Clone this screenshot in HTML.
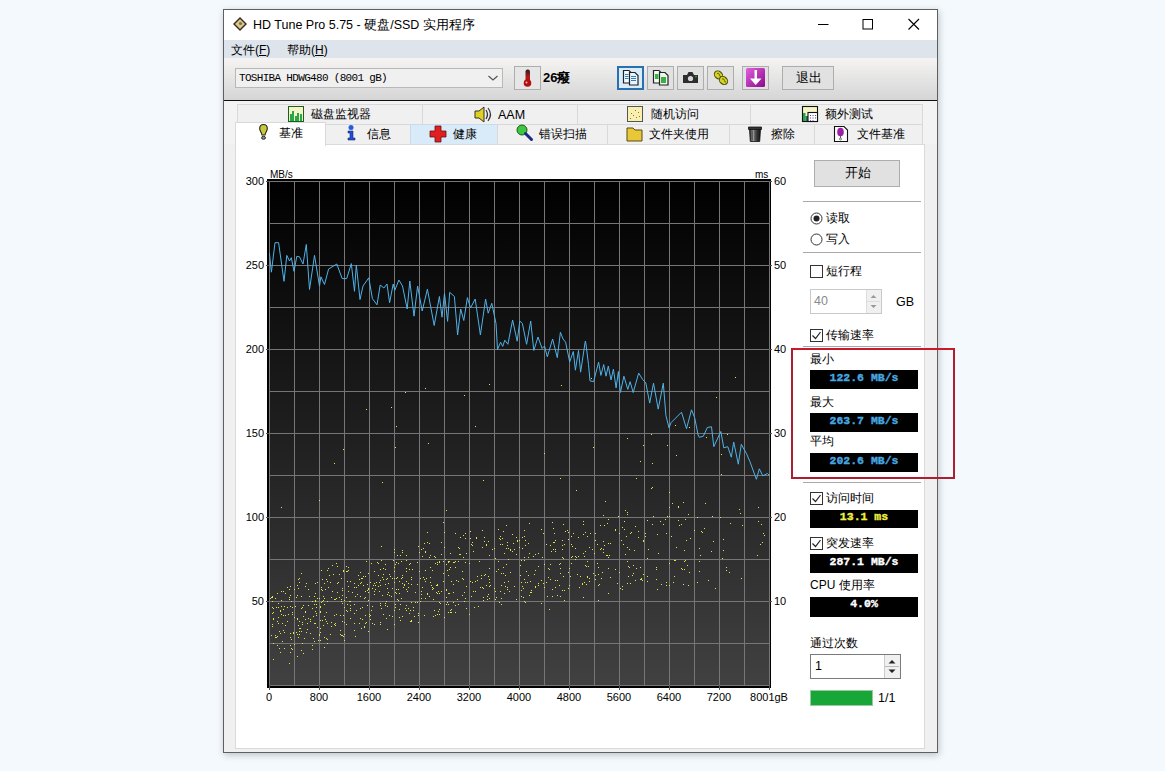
<!DOCTYPE html>
<html><head><meta charset="utf-8">
<style>
*{margin:0;padding:0;box-sizing:border-box}
html,body{width:1165px;height:771px;overflow:hidden;background:#f3f9fd;font-family:"Liberation Sans",sans-serif;color:#000}
.a{position:absolute}
.win{position:absolute;left:223px;top:9px;width:715px;height:744px;border:1px solid #5f5f5f;background:#f0f0f0;box-shadow:1px 2px 7px rgba(0,0,0,0.22)}
.yl{position:absolute;left:235px;width:29px;text-align:right;font-size:11px;line-height:14px}
.yr{position:absolute;left:774px;width:30px;text-align:left;font-size:11px;line-height:14px}
.xl{position:absolute;top:690px;width:60px;text-align:center;font-size:11px;line-height:14px}
.t12{font-size:12px;line-height:16px}
.lcd{position:absolute;left:810px;width:108px;background:#000;font-family:"Liberation Mono",monospace;font-weight:bold;font-size:11.5px;text-align:center;line-height:15px;-webkit-text-stroke:0.35px currentColor}
.cb{position:absolute;left:810px;width:13px;height:13px;border:1px solid #333;background:#fff}
.tab{position:absolute;height:20px;border:1px solid #d9d9d9;border-bottom:none;background:#f0f0f0;font-size:12px;line-height:19px}
.btn{position:absolute;border:1px solid #adadad;background:#e1e1e1}
.sep{position:absolute;left:803px;width:118px;height:1px;background:#a8a8a8}
</style></head><body>
<div class="win"></div>
<!-- title bar -->
<div class="a" style="left:224px;top:10px;width:713px;height:30px;background:#fff"></div>
<div class="a t12" style="left:253px;top:17px;font-size:12.5px;color:#000">HD Tune Pro 5.75 - 硬盘/SSD 实用程序</div>
<!-- menu -->
<div class="a" style="left:224px;top:40px;width:713px;height:18px;background:#dde4ec"></div>
<div class="a t12" style="left:231px;top:42px">文件(<u>F</u>)</div>
<div class="a t12" style="left:287px;top:42px">帮助(<u>H</u>)</div>
<!-- toolbar -->
<div class="a" style="left:224px;top:58px;width:713px;height:42px;background:linear-gradient(#f5f4f3,#d5d5d5)"></div>
<div class="a" style="left:224px;top:100px;width:713px;height:1.5px;background:#111"></div>
<!-- tab panel -->
<div class="a" style="left:235px;top:144px;width:690px;height:605px;background:#fff;border:1px solid #dadada"></div>
<svg width="1165" height="771" style="position:absolute;left:0;top:0">
<defs><linearGradient id="bg" x1="0" y1="0" x2="0" y2="1"><stop offset="0" stop-color="#000"/><stop offset="0.5" stop-color="#1f1f1f"/><stop offset="1" stop-color="#414141"/></linearGradient></defs>
<rect x="267" y="179" width="504" height="509" fill="#000"/>
<rect x="269" y="181" width="500" height="504" fill="url(#bg)"/>
<path d="M269.5 181V685 M294.5 181V685 M319.5 181V685 M344.5 181V685 M369.5 181V685 M394.5 181V685 M419.5 181V685 M444.5 181V685 M469.5 181V685 M494.5 181V685 M519.5 181V685 M544.5 181V685 M569.5 181V685 M594.5 181V685 M619.5 181V685 M644.5 181V685 M669.5 181V685 M694.5 181V685 M719.5 181V685 M744.5 181V685 M769.5 181V685 M269 181.5H769 M269 223.5H769 M269 265.5H769 M269 307.5H769 M269 349.5H769 M269 391.5H769 M269 433.5H769 M269 475.5H769 M269 517.5H769 M269 559.5H769 M269 601.5H769 M269 643.5H769 M269 685.5H769" stroke="#767676" stroke-width="1" fill="none" shape-rendering="crispEdges"/>
<path d="M431 585h1v1h-1zM299 582h1v1h-1zM305 611h1v1h-1zM557 595h1v1h-1zM342 590h1v1h-1zM588 566h1v1h-1zM300 628h1v1h-1zM496 597h1v1h-1zM392 588h1v1h-1zM758 521h1v1h-1zM346 566h1v1h-1zM559 585h1v1h-1zM506 525h1v1h-1zM679 525h1v1h-1zM281 606h1v1h-1zM334 599h1v1h-1zM310 621h1v1h-1zM409 564h1v1h-1zM358 575h1v1h-1zM272 613h1v1h-1zM527 582h1v1h-1zM465 538h1v1h-1zM301 596h1v1h-1zM270 598h1v1h-1zM283 630h1v1h-1zM451 609h1v1h-1zM502 538h1v1h-1zM683 502h1v1h-1zM533 556h1v1h-1zM400 555h1v1h-1zM434 610h1v1h-1zM383 574h1v1h-1zM284 606h1v1h-1zM380 569h1v1h-1zM312 645h1v1h-1zM359 579h1v1h-1zM631 532h1v1h-1zM343 636h1v1h-1zM445 559h1v1h-1zM681 524h1v1h-1zM390 576h1v1h-1zM446 590h1v1h-1zM520 565h1v1h-1zM272 601h1v1h-1zM432 587h1v1h-1zM394 610h1v1h-1zM575 556h1v1h-1zM688 514h1v1h-1zM306 583h1v1h-1zM347 604h1v1h-1zM379 591h1v1h-1zM350 601h1v1h-1zM367 605h1v1h-1zM279 631h1v1h-1zM302 643h1v1h-1zM290 606h1v1h-1zM678 507h1v1h-1zM315 623h1v1h-1zM306 632h1v1h-1zM303 616h1v1h-1zM403 587h1v1h-1zM295 606h1v1h-1zM648 549h1v1h-1zM395 604h1v1h-1zM364 626h1v1h-1zM466 586h1v1h-1zM441 591h1v1h-1zM297 585h1v1h-1zM397 555h1v1h-1zM410 563h1v1h-1zM348 586h1v1h-1zM424 543h1v1h-1zM506 548h1v1h-1zM315 583h1v1h-1zM422 587h1v1h-1zM464 601h1v1h-1zM292 649h1v1h-1zM339 597h1v1h-1zM385 569h1v1h-1zM548 577h1v1h-1zM514 586h1v1h-1zM598 574h1v1h-1zM307 629h1v1h-1zM516 554h1v1h-1zM590 533h1v1h-1zM553 528h1v1h-1zM607 555h1v1h-1zM715 588h1v1h-1zM279 648h1v1h-1zM374 571h1v1h-1zM341 635h1v1h-1zM385 584h1v1h-1zM272 624h1v1h-1zM427 542h1v1h-1zM688 585h1v1h-1zM455 612h1v1h-1zM450 567h1v1h-1zM412 569h1v1h-1zM524 560h1v1h-1zM628 566h1v1h-1zM413 607h1v1h-1zM418 615h1v1h-1zM597 563h1v1h-1zM374 594h1v1h-1zM494 548h1v1h-1zM389 595h1v1h-1zM643 541h1v1h-1zM301 650h1v1h-1zM521 590h1v1h-1zM469 614h1v1h-1zM705 503h1v1h-1zM562 549h1v1h-1zM324 616h1v1h-1zM498 529h1v1h-1zM386 601h1v1h-1zM326 612h1v1h-1zM463 579h1v1h-1zM387 629h1v1h-1zM423 577h1v1h-1zM383 579h1v1h-1zM610 577h1v1h-1zM678 520h1v1h-1zM517 541h1v1h-1zM343 570h1v1h-1zM341 578h1v1h-1zM362 607h1v1h-1zM601 548h1v1h-1zM409 613h1v1h-1zM448 604h1v1h-1zM366 622h1v1h-1zM475 591h1v1h-1zM439 614h1v1h-1zM401 578h1v1h-1zM740 513h1v1h-1zM462 571h1v1h-1zM572 546h1v1h-1zM660 521h1v1h-1zM287 607h1v1h-1zM402 552h1v1h-1zM387 594h1v1h-1zM601 578h1v1h-1zM638 531h1v1h-1zM346 597h1v1h-1zM523 597h1v1h-1zM763 533h1v1h-1zM290 586h1v1h-1zM399 609h1v1h-1zM378 563h1v1h-1zM397 599h1v1h-1zM608 543h1v1h-1zM302 607h1v1h-1zM352 592h1v1h-1zM426 578h1v1h-1zM451 581h1v1h-1zM273 612h1v1h-1zM500 536h1v1h-1zM314 604h1v1h-1zM324 637h1v1h-1zM368 631h1v1h-1zM681 568h1v1h-1zM471 596h1v1h-1zM528 543h1v1h-1zM290 637h1v1h-1zM569 568h1v1h-1zM479 561h1v1h-1zM282 623h1v1h-1zM498 569h1v1h-1zM316 615h1v1h-1zM587 576h1v1h-1zM521 596h1v1h-1zM726 570h1v1h-1zM647 581h1v1h-1zM676 547h1v1h-1zM522 537h1v1h-1zM350 618h1v1h-1zM327 623h1v1h-1zM322 620h1v1h-1zM449 569h1v1h-1zM640 567h1v1h-1zM562 540h1v1h-1zM287 621h1v1h-1zM336 614h1v1h-1zM271 597h1v1h-1zM563 576h1v1h-1zM337 592h1v1h-1zM470 538h1v1h-1zM550 579h1v1h-1zM394 549h1v1h-1zM472 542h1v1h-1zM739 509h1v1h-1zM522 586h1v1h-1zM294 644h1v1h-1zM273 643h1v1h-1zM383 568h1v1h-1zM437 593h1v1h-1zM546 582h1v1h-1zM402 616h1v1h-1zM400 604h1v1h-1zM642 580h1v1h-1zM504 593h1v1h-1zM488 576h1v1h-1zM309 596h1v1h-1zM323 600h1v1h-1zM303 605h1v1h-1zM303 653h1v1h-1zM326 638h1v1h-1zM585 532h1v1h-1zM429 543h1v1h-1zM411 577h1v1h-1zM285 615h1v1h-1zM443 581h1v1h-1zM678 506h1v1h-1zM272 626h1v1h-1zM443 561h1v1h-1zM411 602h1v1h-1zM310 633h1v1h-1zM583 553h1v1h-1zM712 516h1v1h-1zM459 548h1v1h-1zM444 547h1v1h-1zM354 623h1v1h-1zM365 615h1v1h-1zM347 581h1v1h-1zM433 616h1v1h-1zM321 589h1v1h-1zM635 526h1v1h-1zM323 596h1v1h-1zM615 569h1v1h-1zM341 599h1v1h-1zM480 587h1v1h-1zM589 547h1v1h-1zM584 556h1v1h-1zM580 576h1v1h-1zM658 553h1v1h-1zM289 597h1v1h-1zM320 611h1v1h-1zM525 582h1v1h-1zM375 589h1v1h-1zM331 597h1v1h-1zM277 621h1v1h-1zM445 559h1v1h-1zM379 582h1v1h-1zM334 624h1v1h-1zM446 604h1v1h-1zM503 573h1v1h-1zM694 530h1v1h-1zM482 530h1v1h-1zM420 578h1v1h-1zM598 600h1v1h-1zM340 615h1v1h-1zM276 637h1v1h-1zM386 579h1v1h-1zM354 604h1v1h-1zM368 589h1v1h-1zM546 544h1v1h-1zM503 567h1v1h-1zM273 619h1v1h-1zM457 599h1v1h-1zM284 632h1v1h-1zM524 601h1v1h-1zM439 561h1v1h-1zM375 585h1v1h-1zM682 569h1v1h-1zM435 563h1v1h-1zM290 652h1v1h-1zM273 659h1v1h-1zM577 574h1v1h-1zM602 572h1v1h-1zM360 618h1v1h-1zM550 545h1v1h-1zM429 596h1v1h-1zM290 645h1v1h-1zM277 636h1v1h-1zM475 581h1v1h-1zM346 571h1v1h-1zM314 596h1v1h-1zM628 576h1v1h-1zM633 565h1v1h-1zM627 514h1v1h-1zM425 551h1v1h-1zM512 551h1v1h-1zM342 595h1v1h-1zM584 556h1v1h-1zM552 522h1v1h-1zM435 615h1v1h-1zM458 581h1v1h-1zM672 503h1v1h-1zM291 648h1v1h-1zM555 587h1v1h-1zM443 573h1v1h-1zM370 619h1v1h-1zM502 544h1v1h-1zM314 623h1v1h-1zM507 542h1v1h-1zM360 583h1v1h-1zM344 640h1v1h-1zM323 625h1v1h-1zM529 523h1v1h-1zM552 589h1v1h-1zM396 562h1v1h-1zM312 608h1v1h-1zM723 550h1v1h-1zM330 582h1v1h-1zM604 545h1v1h-1zM380 580h1v1h-1zM687 565h1v1h-1zM298 637h1v1h-1zM322 590h1v1h-1zM510 549h1v1h-1zM627 512h1v1h-1zM380 624h1v1h-1zM318 640h1v1h-1zM495 591h1v1h-1zM380 605h1v1h-1zM342 588h1v1h-1zM354 587h1v1h-1zM327 570h1v1h-1zM508 548h1v1h-1zM319 635h1v1h-1zM757 555h1v1h-1zM340 630h1v1h-1zM555 540h1v1h-1zM624 521h1v1h-1zM406 589h1v1h-1zM371 610h1v1h-1zM674 576h1v1h-1zM516 599h1v1h-1zM363 585h1v1h-1zM455 533h1v1h-1zM330 634h1v1h-1zM430 577h1v1h-1zM526 571h1v1h-1zM361 578h1v1h-1zM618 516h1v1h-1zM557 580h1v1h-1zM292 614h1v1h-1zM409 569h1v1h-1zM343 615h1v1h-1zM464 592h1v1h-1zM657 534h1v1h-1zM297 656h1v1h-1zM585 565h1v1h-1zM486 545h1v1h-1zM711 551h1v1h-1zM608 557h1v1h-1zM529 595h1v1h-1zM422 556h1v1h-1zM404 584h1v1h-1zM332 591h1v1h-1zM314 641h1v1h-1zM554 533h1v1h-1zM575 548h1v1h-1zM380 585h1v1h-1zM699 548h1v1h-1zM417 562h1v1h-1zM301 608h1v1h-1zM324 647h1v1h-1zM446 589h1v1h-1zM726 567h1v1h-1zM555 580h1v1h-1zM572 556h1v1h-1zM465 562h1v1h-1zM519 547h1v1h-1zM560 596h1v1h-1zM275 635h1v1h-1zM528 575h1v1h-1zM448 561h1v1h-1zM319 598h1v1h-1zM489 598h1v1h-1zM355 636h1v1h-1zM525 602h1v1h-1zM348 591h1v1h-1zM364 598h1v1h-1zM587 561h1v1h-1zM423 548h1v1h-1zM603 552h1v1h-1zM402 583h1v1h-1zM331 622h1v1h-1zM320 606h1v1h-1zM301 631h1v1h-1zM626 536h1v1h-1zM560 563h1v1h-1zM297 619h1v1h-1zM394 624h1v1h-1zM427 594h1v1h-1zM391 596h1v1h-1zM424 579h1v1h-1zM448 612h1v1h-1zM550 564h1v1h-1zM331 597h1v1h-1zM365 576h1v1h-1zM348 570h1v1h-1zM686 540h1v1h-1zM446 564h1v1h-1zM374 591h1v1h-1zM622 586h1v1h-1zM453 584h1v1h-1zM525 545h1v1h-1zM462 578h1v1h-1zM358 585h1v1h-1zM324 598h1v1h-1zM425 552h1v1h-1zM411 621h1v1h-1zM336 563h1v1h-1zM600 549h1v1h-1zM583 524h1v1h-1zM290 595h1v1h-1zM290 633h1v1h-1zM627 547h1v1h-1zM413 610h1v1h-1zM294 589h1v1h-1zM643 574h1v1h-1zM410 621h1v1h-1zM583 521h1v1h-1zM483 600h1v1h-1zM400 620h1v1h-1zM541 529h1v1h-1zM425 598h1v1h-1zM388 592h1v1h-1zM419 552h1v1h-1zM436 585h1v1h-1zM568 588h1v1h-1zM327 601h1v1h-1zM368 592h1v1h-1zM432 570h1v1h-1zM312 649h1v1h-1zM324 604h1v1h-1zM595 540h1v1h-1zM284 648h1v1h-1zM354 630h1v1h-1zM433 599h1v1h-1zM454 562h1v1h-1zM552 596h1v1h-1zM516 537h1v1h-1zM559 564h1v1h-1zM315 611h1v1h-1zM630 583h1v1h-1zM411 579h1v1h-1zM439 593h1v1h-1zM417 584h1v1h-1zM367 590h1v1h-1zM674 560h1v1h-1zM418 613h1v1h-1zM441 542h1v1h-1zM608 519h1v1h-1zM477 580h1v1h-1zM327 643h1v1h-1zM396 593h1v1h-1zM514 549h1v1h-1zM563 558h1v1h-1zM544 587h1v1h-1zM321 602h1v1h-1zM656 569h1v1h-1zM278 607h1v1h-1zM622 589h1v1h-1zM354 583h1v1h-1zM331 626h1v1h-1zM571 563h1v1h-1zM326 621h1v1h-1zM327 581h1v1h-1zM362 578h1v1h-1zM742 525h1v1h-1zM669 516h1v1h-1zM507 589h1v1h-1zM308 589h1v1h-1zM355 596h1v1h-1zM463 535h1v1h-1zM293 632h1v1h-1zM406 555h1v1h-1zM764 535h1v1h-1zM585 551h1v1h-1zM421 591h1v1h-1zM586 566h1v1h-1zM510 550h1v1h-1zM444 532h1v1h-1zM553 542h1v1h-1zM420 601h1v1h-1zM310 619h1v1h-1zM448 575h1v1h-1zM398 563h1v1h-1zM621 540h1v1h-1zM593 573h1v1h-1zM569 585h1v1h-1zM364 627h1v1h-1zM433 588h1v1h-1zM299 578h1v1h-1zM437 584h1v1h-1zM762 542h1v1h-1zM434 556h1v1h-1zM538 566h1v1h-1zM570 576h1v1h-1zM656 567h1v1h-1zM496 571h1v1h-1zM507 587h1v1h-1zM647 520h1v1h-1zM547 596h1v1h-1zM344 622h1v1h-1zM657 589h1v1h-1zM587 577h1v1h-1zM324 583h1v1h-1zM470 531h1v1h-1zM382 577h1v1h-1zM385 605h1v1h-1zM378 575h1v1h-1zM411 584h1v1h-1zM568 572h1v1h-1zM374 583h1v1h-1zM418 546h1v1h-1zM275 598h1v1h-1zM610 543h1v1h-1zM758 507h1v1h-1zM521 560h1v1h-1zM280 611h1v1h-1zM338 582h1v1h-1zM344 600h1v1h-1zM406 571h1v1h-1zM292 612h1v1h-1zM541 580h1v1h-1zM469 563h1v1h-1zM474 607h1v1h-1zM397 577h1v1h-1zM722 558h1v1h-1zM592 549h1v1h-1zM387 606h1v1h-1zM625 554h1v1h-1zM583 534h1v1h-1zM402 577h1v1h-1zM380 622h1v1h-1zM531 590h1v1h-1zM499 602h1v1h-1zM702 532h1v1h-1zM347 571h1v1h-1zM495 558h1v1h-1zM508 581h1v1h-1zM609 555h1v1h-1zM460 554h1v1h-1zM299 631h1v1h-1zM685 560h1v1h-1zM370 615h1v1h-1zM490 585h1v1h-1zM473 591h1v1h-1zM455 567h1v1h-1zM647 558h1v1h-1zM283 615h1v1h-1zM489 568h1v1h-1zM470 581h1v1h-1zM329 575h1v1h-1zM297 634h1v1h-1zM297 618h1v1h-1zM704 528h1v1h-1zM273 608h1v1h-1zM524 536h1v1h-1zM697 517h1v1h-1zM501 573h1v1h-1zM669 585h1v1h-1zM535 570h1v1h-1zM406 568h1v1h-1zM299 621h1v1h-1zM700 555h1v1h-1zM417 602h1v1h-1zM320 628h1v1h-1zM398 600h1v1h-1zM298 579h1v1h-1zM560 568h1v1h-1zM689 572h1v1h-1zM459 554h1v1h-1zM317 627h1v1h-1zM683 584h1v1h-1zM415 602h1v1h-1zM568 532h1v1h-1zM405 608h1v1h-1zM597 544h1v1h-1zM393 560h1v1h-1zM548 568h1v1h-1zM567 530h1v1h-1zM336 598h1v1h-1zM600 525h1v1h-1zM344 634h1v1h-1zM517 540h1v1h-1zM522 548h1v1h-1zM371 563h1v1h-1zM278 623h1v1h-1zM554 542h1v1h-1zM285 625h1v1h-1zM713 541h1v1h-1zM624 529h1v1h-1zM760 544h1v1h-1zM729 572h1v1h-1zM473 551h1v1h-1zM441 554h1v1h-1zM509 591h1v1h-1zM369 616h1v1h-1zM316 607h1v1h-1zM641 579h1v1h-1zM564 590h1v1h-1zM741 578h1v1h-1zM395 564h1v1h-1zM465 598h1v1h-1zM472 582h1v1h-1zM272 597h1v1h-1zM571 544h1v1h-1zM578 537h1v1h-1zM619 572h1v1h-1zM291 601h1v1h-1zM382 595h1v1h-1zM684 550h1v1h-1zM357 594h1v1h-1zM320 640h1v1h-1zM308 605h1v1h-1zM585 565h1v1h-1zM298 625h1v1h-1zM643 540h1v1h-1zM342 603h1v1h-1zM589 581h1v1h-1zM541 603h1v1h-1zM408 583h1v1h-1zM665 519h1v1h-1zM638 537h1v1h-1zM418 622h1v1h-1zM430 555h1v1h-1zM466 608h1v1h-1zM494 588h1v1h-1zM427 593h1v1h-1zM645 536h1v1h-1zM534 574h1v1h-1zM402 550h1v1h-1zM476 538h1v1h-1zM656 579h1v1h-1zM440 603h1v1h-1zM535 586h1v1h-1zM337 566h1v1h-1zM603 549h1v1h-1zM406 610h1v1h-1zM335 625h1v1h-1zM407 591h1v1h-1zM381 608h1v1h-1zM669 563h1v1h-1zM272 596h1v1h-1zM299 628h1v1h-1zM325 619h1v1h-1zM435 557h1v1h-1zM285 593h1v1h-1zM481 578h1v1h-1zM525 540h1v1h-1zM761 524h1v1h-1zM623 544h1v1h-1zM471 544h1v1h-1zM368 573h1v1h-1zM549 609h1v1h-1zM301 573h1v1h-1zM401 561h1v1h-1zM292 607h1v1h-1zM321 570h1v1h-1zM507 545h1v1h-1zM551 551h1v1h-1zM635 580h1v1h-1zM337 583h1v1h-1zM501 598h1v1h-1zM305 619h1v1h-1zM372 623h1v1h-1zM322 579h1v1h-1zM489 586h1v1h-1zM504 582h1v1h-1zM615 530h1v1h-1zM568 539h1v1h-1zM289 663h1v1h-1zM289 599h1v1h-1zM346 624h1v1h-1zM363 576h1v1h-1zM271 635h1v1h-1zM520 575h1v1h-1zM542 557h1v1h-1zM641 578h1v1h-1zM594 553h1v1h-1zM446 597h1v1h-1zM453 592h1v1h-1zM653 516h1v1h-1zM529 553h1v1h-1zM627 561h1v1h-1zM360 596h1v1h-1zM396 578h1v1h-1zM645 533h1v1h-1zM280 652h1v1h-1zM322 601h1v1h-1zM453 602h1v1h-1zM315 593h1v1h-1zM277 645h1v1h-1zM394 552h1v1h-1zM374 624h1v1h-1zM421 549h1v1h-1zM450 553h1v1h-1zM406 560h1v1h-1zM421 594h1v1h-1zM684 569h1v1h-1zM604 525h1v1h-1zM598 567h1v1h-1zM342 635h1v1h-1zM381 546h1v1h-1zM335 599h1v1h-1zM395 592h1v1h-1zM394 571h1v1h-1zM367 584h1v1h-1zM589 578h1v1h-1zM387 578h1v1h-1zM499 538h1v1h-1zM385 564h1v1h-1zM450 612h1v1h-1zM697 582h1v1h-1zM389 615h1v1h-1zM634 550h1v1h-1zM372 588h1v1h-1zM360 608h1v1h-1zM282 641h1v1h-1zM571 536h1v1h-1zM720 517h1v1h-1zM378 586h1v1h-1zM365 597h1v1h-1zM276 607h1v1h-1zM579 587h1v1h-1zM430 567h1v1h-1zM281 600h1v1h-1zM398 589h1v1h-1zM339 574h1v1h-1zM530 592h1v1h-1zM387 588h1v1h-1zM296 597h1v1h-1zM414 616h1v1h-1zM595 533h1v1h-1zM598 585h1v1h-1zM308 618h1v1h-1zM615 529h1v1h-1zM307 623h1v1h-1zM275 637h1v1h-1zM386 618h1v1h-1zM636 568h1v1h-1zM377 562h1v1h-1zM472 545h1v1h-1zM447 570h1v1h-1zM510 572h1v1h-1zM368 588h1v1h-1zM563 524h1v1h-1zM305 586h1v1h-1zM272 607h1v1h-1zM327 639h1v1h-1zM437 562h1v1h-1zM297 595h1v1h-1zM401 598h1v1h-1zM296 632h1v1h-1zM627 583h1v1h-1zM365 623h1v1h-1zM385 603h1v1h-1zM560 573h1v1h-1zM399 593h1v1h-1zM380 603h1v1h-1zM372 606h1v1h-1zM666 533h1v1h-1zM298 588h1v1h-1zM500 539h1v1h-1zM530 581h1v1h-1zM305 612h1v1h-1zM603 541h1v1h-1zM455 605h1v1h-1zM578 556h1v1h-1zM334 615h1v1h-1zM304 638h1v1h-1zM317 582h1v1h-1zM652 524h1v1h-1zM685 519h1v1h-1zM482 547h1v1h-1zM399 617h1v1h-1zM571 557h1v1h-1zM366 561h1v1h-1zM439 562h1v1h-1zM356 587h1v1h-1zM478 606h1v1h-1zM402 575h1v1h-1zM458 547h1v1h-1zM392 616h1v1h-1zM675 560h1v1h-1zM538 585h1v1h-1zM708 580h1v1h-1zM294 617h1v1h-1zM439 602h1v1h-1zM394 578h1v1h-1zM667 516h1v1h-1zM500 591h1v1h-1zM424 615h1v1h-1zM425 581h1v1h-1zM528 557h1v1h-1zM450 610h1v1h-1zM332 565h1v1h-1zM484 575h1v1h-1zM663 524h1v1h-1zM486 585h1v1h-1zM370 582h1v1h-1zM519 540h1v1h-1zM666 582h1v1h-1zM373 585h1v1h-1zM549 569h1v1h-1zM399 581h1v1h-1zM503 531h1v1h-1zM388 583h1v1h-1zM371 610h1v1h-1zM406 605h1v1h-1zM313 638h1v1h-1zM437 564h1v1h-1zM350 610h1v1h-1zM312 601h1v1h-1zM361 582h1v1h-1zM505 575h1v1h-1zM354 613h1v1h-1zM482 587h1v1h-1zM346 610h1v1h-1zM447 602h1v1h-1zM485 574h1v1h-1zM342 621h1v1h-1zM564 544h1v1h-1zM361 628h1v1h-1zM283 615h1v1h-1zM444 617h1v1h-1zM508 559h1v1h-1zM455 561h1v1h-1zM538 553h1v1h-1zM281 591h1v1h-1zM343 571h1v1h-1zM315 601h1v1h-1zM462 595h1v1h-1zM289 589h1v1h-1zM326 579h1v1h-1zM486 544h1v1h-1zM622 527h1v1h-1zM299 634h1v1h-1zM489 579h1v1h-1zM438 611h1v1h-1zM341 601h1v1h-1zM273 618h1v1h-1zM576 557h1v1h-1zM429 557h1v1h-1zM349 601h1v1h-1zM344 607h1v1h-1zM562 590h1v1h-1zM408 608h1v1h-1zM632 575h1v1h-1zM629 567h1v1h-1zM483 588h1v1h-1zM505 586h1v1h-1zM608 593h1v1h-1zM587 536h1v1h-1zM287 587h1v1h-1zM501 585h1v1h-1zM362 619h1v1h-1zM437 614h1v1h-1zM661 584h1v1h-1zM584 582h1v1h-1zM319 634h1v1h-1zM501 604h1v1h-1zM350 605h1v1h-1zM504 553h1v1h-1zM564 600h1v1h-1zM340 634h1v1h-1zM543 533h1v1h-1zM583 597h1v1h-1zM586 584h1v1h-1zM302 624h1v1h-1zM523 588h1v1h-1zM625 510h1v1h-1zM553 549h1v1h-1zM277 593h1v1h-1zM321 587h1v1h-1zM617 583h1v1h-1zM325 589h1v1h-1zM595 579h1v1h-1zM449 561h1v1h-1zM350 608h1v1h-1zM476 537h1v1h-1zM647 576h1v1h-1zM316 604h1v1h-1zM495 599h1v1h-1zM360 572h1v1h-1zM481 575h1v1h-1zM392 578h1v1h-1zM484 537h1v1h-1zM348 567h1v1h-1zM524 579h1v1h-1zM599 584h1v1h-1zM369 614h1v1h-1zM437 585h1v1h-1zM484 541h1v1h-1zM320 607h1v1h-1zM673 582h1v1h-1zM506 564h1v1h-1zM293 633h1v1h-1zM430 582h1v1h-1zM453 562h1v1h-1zM488 541h1v1h-1zM347 611h1v1h-1zM460 537h1v1h-1zM368 600h1v1h-1zM456 580h1v1h-1zM521 582h1v1h-1zM535 587h1v1h-1zM394 582h1v1h-1zM415 592h1v1h-1zM376 582h1v1h-1zM449 593h1v1h-1zM406 581h1v1h-1zM671 536h1v1h-1zM513 543h1v1h-1zM489 555h1v1h-1zM410 610h1v1h-1zM483 597h1v1h-1zM489 582h1v1h-1zM280 610h1v1h-1zM436 592h1v1h-1zM280 633h1v1h-1zM562 557h1v1h-1zM432 589h1v1h-1zM425 570h1v1h-1zM328 587h1v1h-1zM458 604h1v1h-1zM404 585h1v1h-1zM383 614h1v1h-1zM543 583h1v1h-1zM315 600h1v1h-1zM317 598h1v1h-1zM620 588h1v1h-1zM524 557h1v1h-1zM448 593h1v1h-1zM411 620h1v1h-1zM535 554h1v1h-1zM439 609h1v1h-1zM492 549h1v1h-1zM498 561h1v1h-1zM606 555h1v1h-1zM356 610h1v1h-1zM575 559h1v1h-1zM544 564h1v1h-1zM608 568h1v1h-1zM555 551h1v1h-1zM451 612h1v1h-1zM595 575h1v1h-1zM633 573h1v1h-1zM278 617h1v1h-1zM699 571h1v1h-1zM283 591h1v1h-1zM350 581h1v1h-1zM666 585h1v1h-1zM316 613h1v1h-1zM699 561h1v1h-1zM368 573h1v1h-1zM684 561h1v1h-1zM524 530h1v1h-1zM448 562h1v1h-1zM531 592h1v1h-1zM522 537h1v1h-1zM317 627h1v1h-1zM458 561h1v1h-1zM396 589h1v1h-1zM582 583h1v1h-1zM487 596h1v1h-1zM320 612h1v1h-1zM463 557h1v1h-1zM365 591h1v1h-1zM278 603h1v1h-1zM538 583h1v1h-1zM555 549h1v1h-1zM302 622h1v1h-1zM320 632h1v1h-1zM394 567h1v1h-1zM419 571h1v1h-1zM630 533h1v1h-1zM288 614h1v1h-1zM465 533h1v1h-1zM488 594h1v1h-1zM359 623h1v1h-1zM500 544h1v1h-1zM701 531h1v1h-1zM582 584h1v1h-1zM335 623h1v1h-1zM281 614h1v1h-1zM438 591h1v1h-1zM328 568h1v1h-1zM283 609h1v1h-1zM477 576h1v1h-1zM487 599h1v1h-1zM466 553h1v1h-1zM291 639h1v1h-1zM408 587h1v1h-1zM389 574h1v1h-1zM421 598h1v1h-1zM730 523h1v1h-1zM333 574h1v1h-1zM381 560h1v1h-1zM395 607h1v1h-1zM640 579h1v1h-1zM320 620h1v1h-1zM629 549h1v1h-1zM562 545h1v1h-1zM313 616h1v1h-1zM521 560h1v1h-1zM690 538h1v1h-1zM689 427h1v1h-1zM391 407h1v1h-1zM366 409h1v1h-1zM651 434h1v1h-1zM676 455h1v1h-1zM560 478h1v1h-1zM605 501h1v1h-1zM319 500h1v1h-1zM593 447h1v1h-1zM721 474h1v1h-1zM446 510h1v1h-1zM576 490h1v1h-1zM512 534h1v1h-1zM723 539h1v1h-1zM489 384h1v1h-1zM619 533h1v1h-1zM662 386h1v1h-1zM640 461h1v1h-1zM443 522h1v1h-1zM667 445h1v1h-1zM343 449h1v1h-1zM428 443h1v1h-1zM607 523h1v1h-1zM425 388h1v1h-1zM396 426h1v1h-1zM475 426h1v1h-1zM675 425h1v1h-1zM721 454h1v1h-1zM281 507h1v1h-1zM544 453h1v1h-1zM405 392h1v1h-1zM735 377h1v1h-1zM669 507h1v1h-1zM651 488h1v1h-1zM652 487h1v1h-1zM395 447h1v1h-1zM603 515h1v1h-1zM565 531h1v1h-1zM652 463h1v1h-1zM706 437h1v1h-1zM427 532h1v1h-1zM573 533h1v1h-1zM636 478h1v1h-1zM627 438h1v1h-1zM561 385h1v1h-1zM591 378h1v1h-1zM334 463h1v1h-1zM716 397h1v1h-1zM643 445h1v1h-1zM727 434h1v1h-1zM483 480h1v1h-1zM464 395h1v1h-1zM669 492h1v1h-1zM382 482h1v1h-1z" fill="#e4e44c"/>
<polyline points="269.4,253.0 271.4,272.2 275.0,242.7 278.6,242.7 284.0,281.3 286.8,255.4 289.5,261.0 291.3,257.7 294.0,271.3 296.8,256.3 299.5,256.8 303.0,264.0 306.3,244.5 309.5,289.5 314.5,255.4 319.5,286.0 320.9,276.8 324.5,284.5 328.6,269.0 336.8,264.0 342.2,278.6 346.7,278.6 351.3,263.6 354.5,291.3 356.3,265.0 360.0,299.5 363.0,286.0 368.8,277.8 372.4,298.6 377.0,304.8 380.2,285.0 383.9,288.0 387.0,284.0 389.6,302.7 393.2,284.0 394.8,290.3 398.9,280.0 402.5,286.0 407.2,309.0 409.8,281.0 414.0,316.2 417.6,286.0 422.2,311.0 427.4,289.2 434.2,325.5 439.4,296.5 442.0,317.2 444.5,293.4 447.6,321.4 449.7,292.3 454.4,296.5 457.6,335.0 460.7,309.0 463.8,320.5 467.4,297.6 470.5,308.0 475.2,299.0 480.4,335.0 485.6,299.0 488.2,313.2 491.8,303.3 496.0,323.6 497.5,349.5 500.6,342.2 502.7,346.4 504.8,340.2 507.9,344.3 512.6,320.0 517.2,341.2 519.8,321.0 522.4,323.6 526.6,344.3 530.7,321.0 533.8,350.5 538.0,337.0 542.1,348.5 544.5,346.0 547.3,356.8 552.6,339.0 557.3,357.7 560.4,332.3 563.0,339.0 565.6,342.2 569.7,361.9 573.3,351.5 575.4,370.2 578.5,350.5 580.6,372.2 585.3,341.1 585.8,342.8 588.5,364.5 590.0,380.9 593.6,381.7 598.6,362.2 600.9,375.4 603.7,364.5 606.0,376.2 608.3,366.1 611.0,380.0 613.4,369.2 616.1,387.9 618.4,371.5 620.4,392.5 623.9,376.2 627.8,389.4 630.1,381.7 633.2,392.5 638.7,373.1 642.5,379.3 645.8,382.9 649.7,403.1 653.5,383.2 658.2,409.1 663.3,383.2 665.9,415.4 669.0,427.8 671.1,422.6 681.5,412.2 686.5,428.7 691.5,409.8 694.6,417.5 698.1,435.0 699.3,437.3 703.3,436.2 707.4,427.4 711.5,426.8 713.8,446.7 720.8,431.5 723.8,447.8 727.8,446.7 731.3,457.2 733.7,442.0 738.3,464.2 741.3,444.3 746.5,453.7 750.0,461.8 756.4,479.3 759.3,468.8 762.8,475.8 767.5,473.5 769.8,475.8" fill="none" stroke="#50b2e8" stroke-width="1" stroke-linejoin="miter"/>
<path d="M266 181.5H269 M769 181.5H772 M266 265.5H269 M769 265.5H772 M266 349.5H269 M769 349.5H772 M266 433.5H269 M769 433.5H772 M266 517.5H269 M769 517.5H772 M266 601.5H269 M769 601.5H772 M269.5 685V690 M319.5 685V690 M369.5 685V690 M419.5 685V690 M469.5 685V690 M519.5 685V690 M569.5 685V690 M619.5 685V690 M669.5 685V690 M719.5 685V690 M769.5 685V690" stroke="#555" stroke-width="1" fill="none"/>
</svg>
<div class="yl" style="top:174px">300</div><div class="yr" style="top:174px">60</div><div class="yl" style="top:258px">250</div><div class="yr" style="top:258px">50</div><div class="yl" style="top:342px">200</div><div class="yr" style="top:342px">40</div><div class="yl" style="top:426px">150</div><div class="yr" style="top:426px">30</div><div class="yl" style="top:510px">100</div><div class="yr" style="top:510px">20</div><div class="yl" style="top:594px">50</div><div class="yr" style="top:594px">10</div><div class="xl" style="left:239px">0</div><div class="xl" style="left:289px">800</div><div class="xl" style="left:339px">1600</div><div class="xl" style="left:389px">2400</div><div class="xl" style="left:439px">3200</div><div class="xl" style="left:489px">4000</div><div class="xl" style="left:539px">4800</div><div class="xl" style="left:589px">5600</div><div class="xl" style="left:639px">6400</div><div class="xl" style="left:689px">7200</div><div class="xl" style="left:739px">8001gB</div>
<div class="a" style="left:270px;top:169px;font-size:10px">MB/s</div>
<div class="a" style="left:755px;top:169px;font-size:10px">ms</div>
<!-- tabs -->
<div class="a" style="left:224px;top:101px;width:713px;height:43px;background:#f3f3f3"></div>
<div class="tab" style="left:237px;top:104px;width:186px"></div>
<div class="tab" style="left:422px;top:104px;width:156px"></div>
<div class="tab" style="left:577px;top:104px;width:174px"></div>
<div class="tab" style="left:750px;top:104px;width:173px"></div>
<div class="tab" style="left:325px;top:124px;width:86px;background:#f0f0f0"></div>
<div class="tab" style="left:410px;top:124px;width:88px;background:#d9ebf9;border-color:#c5dcee"></div>
<div class="tab" style="left:497px;top:124px;width:111px"></div>
<div class="tab" style="left:607px;top:124px;width:123px"></div>
<div class="tab" style="left:729px;top:124px;width:86px"></div>
<div class="tab" style="left:814px;top:124px;width:109px"></div>
<div class="a" style="left:235px;top:122px;width:91px;height:24px;background:#fff;border:1px solid #d9d9d9;border-bottom:none"></div>
<div class="a t12" style="left:311px;top:106px">磁盘监视器</div>
<div class="a t12" style="left:498px;top:107px;font-size:12.5px">AAM</div>
<div class="a t12" style="left:651px;top:106px">随机访问</div>
<div class="a t12" style="left:825px;top:106px">额外测试</div>
<div class="a t12" style="left:279px;top:125px">基准</div>
<div class="a t12" style="left:367px;top:126px">信息</div>
<div class="a t12" style="left:453px;top:126px">健康</div>
<div class="a t12" style="left:539px;top:126px">错误扫描</div>
<div class="a t12" style="left:649px;top:126px">文件夹使用</div>
<div class="a t12" style="left:771px;top:126px">擦除</div>
<div class="a t12" style="left:857px;top:126px">文件基准</div>
<svg class="a" style="left:0;top:0" width="1165" height="771">
 <!-- disk monitor icon -->
 <rect x="288.5" y="106.5" width="15" height="15" fill="#f4f4c8" stroke="#1b5e20"/>
 <path d="M290 121V114h2v-3h2v10zM295 121v-5h2v-3h2v8zM300 121v-7h2v7z" fill="#27a844"/>
 <!-- AAM speaker -->
 <path d="M475 111h4l5-4v15l-5-4h-4z" fill="#e0d020" stroke="#333" stroke-width="1"/>
 <path d="M486 110q3 4.5 0 9M488 108q5 6.5 0 13" fill="none" stroke="#333" stroke-width="1.2"/>
 <!-- random access icon -->
 <rect x="627.5" y="106.5" width="15" height="15" fill="#f7f0b0" stroke="#555"/>
 <path d="M630 118h1v1h-1zM633 115h1v1h-1zM636 117h1v1h-1zM638 112h1v1h-1zM631 113h1v1h-1zM635 110h1v1h-1zM639 116h1v1h-1z" fill="#8a7a20"/>
 <!-- extra tests -->
 <rect x="802.5" y="106.5" width="15" height="15" fill="#f6f4c4" stroke="#111" stroke-width="1.1"/>
 <path d="M803 113h2.5v8h-2.5z" fill="#2aa04a"/><path d="M805.5 116h2.5v5h-2.5z" fill="#1a7a6a"/>
 <rect x="808" y="112.5" width="9.5" height="9" fill="#fff" stroke="#111" stroke-width="1.1"/>
 <path d="M810 115h1v1h-1zM812.5 115h1v1h-1zM815 115h1v1h-1zM810 117.5h1v1h-1zM812.5 117.5h1v1h-1zM815 117.5h1v1h-1zM810 120h1v.8h-1zM812.5 120h1v.8h-1z" fill="#5a3aa0"/>
 <!-- bulb -->
 <path d="M263.5 124.5c2.5 0 3.8 1.8 3.8 4c0 2.5-1.8 4-2.3 6.5h-3c-0.5-2.5-2.3-4-2.3-6.5c0-2.2 1.3-4 3.8-4z" fill="#c8c838" stroke="#222" stroke-width="1.1"/>
 <ellipse cx="263.5" cy="137.8" rx="2" ry="1.5" fill="#888" stroke="#222" stroke-width="0.9"/>
 <!-- info i -->
 <circle cx="351" cy="127.5" r="2.5" fill="#2a5bd8"/>
 <path d="M348 131h5v7h2v2h-7v-2h2v-5h-2z" fill="#1f4fd0" stroke="#102a80" stroke-width="0.6"/>
 <!-- health cross -->
 <path d="M435 126h6v5h5v6h-5v5h-6v-5h-5v-6h5z" fill="#e02020" stroke="#6a1010" stroke-width="0.8"/>
 <!-- magnifier -->
 <circle cx="522" cy="130" r="5" fill="#3cc840" stroke="#1a5a1a"/>
 <path d="M525.5 133.5l6 6" stroke="#1a2a80" stroke-width="3" stroke-linecap="round"/>
 <!-- folder -->
 <path d="M627 128h6l2 2h7v11h-15z" fill="#e8c838" stroke="#5a4a10"/>
 <!-- trash -->
 <defs><linearGradient id="trg" x1="0" y1="0" x2="1" y2="0"><stop offset="0" stop-color="#222"/><stop offset="0.35" stop-color="#9a9a9a"/><stop offset="0.6" stop-color="#444"/><stop offset="1" stop-color="#111"/></linearGradient></defs>
 <path d="M748.5 127h13v2.5h-13z" fill="#333" stroke="#111" stroke-width="0.8"/>
 <path d="M749.5 129.5h11l-0.8 12h-9.4z" fill="url(#trg)" stroke="#111" stroke-width="0.8"/>
 <path d="M752.5 130.5v10M755 130.5v10M757.5 130.5v10" stroke="#222" stroke-width="0.6" opacity="0.6"/>
 <!-- file benchmark -->
 <path d="M834.5 126.5h9.5l3.5 3.5v11.5h-13z" fill="#fff" stroke="#111" stroke-width="1.1"/>
 <ellipse cx="840.5" cy="132" rx="3.3" ry="4.3" fill="#9a20a8"/>
 <path d="M840.5 136v2" stroke="#555" stroke-width="1"/><circle cx="840.5" cy="139" r="1" fill="none" stroke="#555" stroke-width="0.8"/>
</svg>
<!-- toolbar controls -->
<div class="a" style="left:235px;top:68px;width:268px;height:20px;background:#f0f0f0;border:1px solid #b8b8b8"></div>
<div class="a" style="left:239px;top:71px;font-family:'Liberation Mono',monospace;font-size:11px;line-height:14px;letter-spacing:-0.68px">TOSHIBA HDWG480 (8001 gB)</div>
<svg class="a" style="left:487px;top:73px" width="12" height="10"><path d="M1.5 3l4.5 4 4.5-4" fill="none" stroke="#555" stroke-width="1.2"/></svg>
<div class="btn" style="left:514px;top:66px;width:27px;height:24px;background:#e6e6e6"></div>
<svg class="a" style="left:514px;top:66px" width="27" height="24"><rect x="11.5" y="3.5" width="4.5" height="13" rx="2" fill="url(#tg)"/><circle cx="13.5" cy="17" r="3.8" fill="#b01010"/><circle cx="12.5" cy="16.5" r="1" fill="#f0c0c0"/></svg>
<div class="a" style="left:543px;top:70px;font-size:13px;font-weight:bold;line-height:16px">26癈</div>
<div class="btn" style="left:617px;top:66px;width:27px;height:24px;background:#d9ecf9;border:2px solid #2a6fb0"></div>
<div class="btn" style="left:647px;top:66px;width:27px;height:24px"></div>
<div class="btn" style="left:677px;top:66px;width:27px;height:24px"></div>
<div class="btn" style="left:707px;top:66px;width:27px;height:24px"></div>
<div class="btn" style="left:742px;top:66px;width:27px;height:24px"></div>
<div class="btn" style="left:782px;top:66px;width:52px;height:24px"></div>
<div class="a t12" style="left:796px;top:70px;font-size:13px">退出</div>
<svg class="a" style="left:0;top:0" width="1165" height="771">
 <path d="M623.5 70.5h5.5l2.5 2.5v10h-8z" fill="#f4f8ff" stroke="#222" stroke-width="1.2"/>
 <path d="M629.5 72.5h5.5l3 3v9.5h-8.5z" fill="#eef4fc" stroke="#222" stroke-width="1.2"/>
 <path d="M625 74.5h3.5M625 76.5h3.5M625 78.5h3.5M631 76.5h5M631 78.5h5M631 80.5h5" stroke="#2f7fb8" stroke-width="1"/>
 <path d="M653.5 70.5h5.5l2.5 2.5v10h-8z" fill="#f4fff4" stroke="#222" stroke-width="1.2"/>
 <path d="M659.5 72.5h5.5l3 3v9.5h-8.5z" fill="#eef8ee" stroke="#222" stroke-width="1.2"/>
 <rect x="655" y="74" width="3.5" height="5" fill="#3cae48"/><rect x="661" y="77" width="5" height="6" fill="#3cae48"/>
 <path d="M683 75h4l1.5-3h4l1.5 3h4v8h-15z" fill="#2e2e2e"/>
 <circle cx="690.5" cy="78.5" r="2.6" fill="#d8d8d8"/><circle cx="696" cy="76.5" r="0.9" fill="#3a9a3a"/>
 <ellipse cx="718.5" cy="75" rx="4.5" ry="3.6" fill="#d4d420" stroke="#4a4810" stroke-width="1" transform="rotate(40 718.5 75)"/>
 <path d="M717 73.5q2-1 2.5 1.5t1.5 1.5" stroke="#4a4810" stroke-width="0.8" fill="none"/>
 <ellipse cx="723.5" cy="80.5" rx="4.5" ry="3.6" fill="#d4d420" stroke="#4a4810" stroke-width="1" transform="rotate(40 723.5 80.5)"/>
 <path d="M722 79q2-1 2.5 1.5t1.5 1.5" stroke="#4a4810" stroke-width="0.8" fill="none"/>
 <defs><linearGradient id="pg" x1="0" y1="0" x2="1" y2="1"><stop offset="0" stop-color="#e060e0"/><stop offset="1" stop-color="#8a0a8a"/></linearGradient>
 <linearGradient id="tg" x1="0" y1="0" x2="0" y2="1"><stop offset="0" stop-color="#222"/><stop offset="0.55" stop-color="#b01818"/><stop offset="1" stop-color="#c01010"/></linearGradient></defs>
 <rect x="746" y="68" width="19" height="19" rx="1.5" fill="url(#pg)"/>
 <path d="M754.5 70h2.5v8.5h4.5l-5.8 6.5-5.8-6.5h4.6z" fill="#fff"/>
 <!-- title icon -->
 <path d="M240 17l7 7-7 7-7-7z" fill="#3a2a20"/>
 <path d="M240 19l5 5-5 5-5-5z" fill="#d8c890"/>
 <circle cx="240.5" cy="23.5" r="1.6" fill="#8a7040"/>
 <!-- window controls -->
 <path d="M818 24.5h10.5" stroke="#000" stroke-width="1"/>
 <rect x="863" y="19.5" width="9.5" height="9.5" fill="none" stroke="#000" stroke-width="1"/>
 <path d="M908.5 19l10.5 10.5M919 19l-10.5 10.5" stroke="#000" stroke-width="1.1"/>
</svg>
<!-- right panel -->
<div class="btn" style="left:814px;top:160px;width:86px;height:27px"></div>
<div class="a" style="left:845px;top:165px;font-size:13px;line-height:16px">开始</div>
<div class="sep" style="top:201px"></div>
<svg class="a" style="left:810px;top:211px" width="14" height="36"><circle cx="6.5" cy="7.5" r="5.5" fill="#fff" stroke="#333"/><circle cx="6.5" cy="7.5" r="3" fill="#222"/><circle cx="6.5" cy="28.5" r="5.5" fill="#fff" stroke="#333"/></svg>
<div class="a t12" style="left:826px;top:210px">读取</div>
<div class="a t12" style="left:826px;top:231px">写入</div>
<div class="sep" style="top:252px"></div>
<div class="cb" style="top:265px"></div>
<div class="a t12" style="left:826px;top:263px">短行程</div>
<div class="a" style="left:810px;top:289px;width:72px;height:25px;border:1px solid #c9c9c9;background:#fff"></div>
<div class="a" style="left:866px;top:290px;width:15px;height:23px;background:#f0f0f0;border-left:1px solid #ddd"></div>
<svg class="a" style="left:866px;top:290px" width="15" height="23"><path d="M4.5 8l3-3 3 3z M4.5 15l3 3 3-3z" fill="#999"/><path d="M1 11.5h13" stroke="#ddd"/></svg>
<div class="a t12" style="left:814px;top:293px;color:#8a8a8a;font-size:12.5px">40</div>
<div class="a t12" style="left:896px;top:294px;font-size:12.5px">GB</div>
<div class="cb" style="top:329px"></div>
<svg class="a" style="left:810px;top:329px" width="13" height="13"><path d="M2.5 6.5l3 3 5-6.5" fill="none" stroke="#222" stroke-width="1.2"/></svg>
<div class="a t12" style="left:826px;top:327px">传输速率</div>
<div class="sep" style="top:346px"></div>
<div class="a t12" style="left:810px;top:351px">最小</div>
<div class="lcd" style="top:370px;height:19px;color:#47a7e0">122.6 MB/s</div>
<div class="a t12" style="left:810px;top:394px">最大</div>
<div class="lcd" style="top:413px;height:19px;color:#47a7e0">263.7 MB/s</div>
<div class="a t12" style="left:810px;top:433px">平均</div>
<div class="lcd" style="top:453px;height:19px;color:#47a7e0">202.6 MB/s</div>
<div class="sep" style="top:482px"></div>
<div class="cb" style="top:492px"></div>
<svg class="a" style="left:810px;top:492px" width="13" height="13"><path d="M2.5 6.5l3 3 5-6.5" fill="none" stroke="#222" stroke-width="1.2"/></svg>
<div class="a t12" style="left:826px;top:490px">访问时间</div>
<div class="lcd" style="top:510px;height:18px;color:#f0f040;line-height:14px">13.1 ms</div>
<div class="cb" style="top:537px"></div>
<svg class="a" style="left:810px;top:537px" width="13" height="13"><path d="M2.5 6.5l3 3 5-6.5" fill="none" stroke="#222" stroke-width="1.2"/></svg>
<div class="a t12" style="left:826px;top:535px">突发速率</div>
<div class="lcd" style="top:554px;height:19px;color:#fff">287.1 MB/s</div>
<div class="a t12" style="left:810px;top:577px">CPU 使用率</div>
<div class="lcd" style="top:597px;height:20px;color:#fff;line-height:14px">4.0%</div>
<div class="a t12" style="left:810px;top:635px">通过次数</div>
<div class="a" style="left:810px;top:654px;width:91px;height:25px;border:1px solid #7a7a7a;background:#fff"></div>
<div class="a" style="left:884px;top:655px;width:16px;height:23px;background:#f0f0f0;border-left:1px solid #ccc"></div>
<svg class="a" style="left:884px;top:655px" width="16" height="23"><path d="M4.5 8.5l3.5-3.5 3.5 3.5z M4.5 14.5l3.5 3.5 3.5-3.5z" fill="#222"/><path d="M1 11.5h14" stroke="#bbb"/></svg>
<div class="a t12" style="left:815px;top:658px;font-size:12.5px">1</div>
<div class="a" style="left:810px;top:690px;width:63px;height:16px;background:#17a637;border:1px solid #9ac9a0"></div>
<div class="a t12" style="left:878px;top:690px;font-size:12.5px">1/1</div>
<!-- red box -->
<div class="a" style="left:791px;top:348px;width:164px;height:131px;border:2px solid #ac1f30;border-top-color:#c81a28"></div>
</body></html>
